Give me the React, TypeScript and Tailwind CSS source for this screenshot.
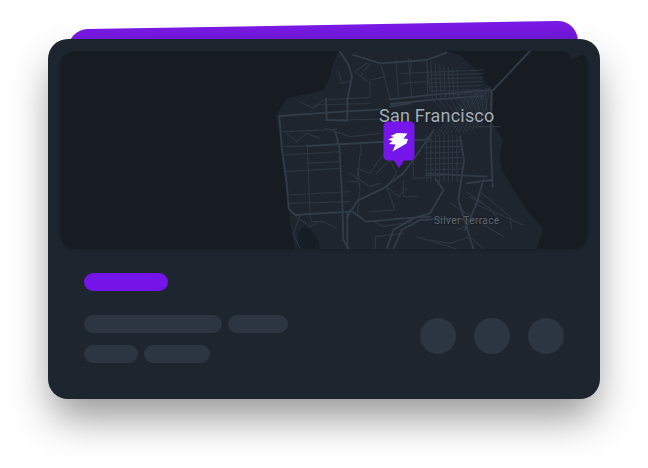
import React from "react";

// everything in the map is traced in 3x zoom coordinates, hence the odd viewBox
const majorRoads = [
  "30,228 170,218 330,208",
  "360,178 500,163 662,150",
  "362,192 500,178 640,168",
  "28,228 36,330 50,430 56,505 75,525 120,522 240,515",
  "210,35 236,75 246,110 232,180 232,242",
  "168,175 170,240 232,242",
  "196,275 208,320 216,460 220,600 235,627",
  "110,318 330,306 480,298",
  "232,530 262,482 340,445 400,400 440,345 492,270",
  "250,45 330,70 470,60 530,38",
  "232,627 232,520",
  "665,155 662,300 668,440",
  "665,155 780,33",
  "570,290 582,360 565,480 590,560 610,627",
  "350,627 370,570 430,535 480,520 520,450 500,420",
  "370,627 395,570 450,540 540,535 600,540",
  "240,510 290,545 400,535 480,530",
  "470,400 650,410",
  "590,430 665,420",
  "640,420 620,490 585,570",
  "360,200 420,190",
];

const minorRoads = [
  "45,345 210,335",
  "50,395 210,385",
  "55,465 240,455",
  "58,490 240,485",
  "112,320 120,520",
  "40,275 200,268",
  "90,185 130,205 160,180 300,172",
  "130,195 300,190",
  "170,240 330,238",
  "300,172 300,130 255,95 290,70",
  "205,95 215,130 246,120",
  "340,100 360,175",
  "330,70 345,110 300,120",
  "378,55 385,170",
  "415,55 425,170",
  "470,60 480,150",
  "395,100 640,90",
  "50,280 80,305 110,280 150,295",
  "90,525 70,580 90,627",
  "120,525 125,545 160,545 200,565",
  "270,340 265,400 270,450 262,520",
  "320,400 360,360 380,400 350,440 385,470 410,445",
  "350,440 375,510 300,515",
  "240,400 300,440 330,430",
  "316,627 316,590 400,580",
  "440,590 560,627",
  "610,490 760,555",
  "630,455 720,530 725,565",
  "540,490 700,590",
  "430,320 430,415",
  "610,260 690,260",
  "300,540 340,560 430,545",
  "640,627 600,590 540,610 480,600",
  "45,320 110,318",
  "240,425 262,425 262,385 300,400 320,370 340,345",
  "270,308 275,345",
  "165,265 196,275 240,290 330,280",
  "300,70 270,110",
  "420,100 425,60",
  "395,130 470,125",
  "110,370 210,365",
  "400,420 400,470 440,470",
  "430,415 480,412",
  "80,530 120,560 140,548",
  "600,470 660,505 690,545",
  "560,570 640,535",
  "590,455 640,490",
];

const landPath =
  "M205 33L190 70 180 110 160 150 100 165 50 175 18 225 30 300 36 340 50 460 60 550 75 627 800 627 820 565 770 510 725 440 695 390 690 345 700 300 668 250 668 155 620 90 570 45 530 33Z";

function MapRoads() {
  const eastGrid = Array.from({ length: 8 }, (_, i) => 470 + i * 13);
  const northRows = Array.from({ length: 6 }, (_, i) => 105 + i * 12);
  const southRows = Array.from({ length: 7 }, (_, i) => 305 + i * 17);
  const hatch = Array.from({ length: 12 }, (_, i) => i * 13);

  return (
    <svg viewBox="-630 33 1584 594" className="block w-full h-full" fill="none" strokeLinejoin="round" strokeLinecap="round">
      <path d={landPath} fill="#1e252e" />
      <path d="M895 60L950 40 954 33 880 33 905 45Z" fill="#1e252e" />
      <path d="M80 627L85 580 105 555 140 590 150 627Z" fill="#171d24" />
      {minorRoads.map((points) => (
        <polyline key={points} points={points} stroke="#2c3540" strokeWidth={3.5} />
      ))}
      {majorRoads.map((points) => (
        <polyline key={points} points={points} stroke="#323c48" strokeWidth={5.5} />
      ))}
      {/* downtown street grids */}
      {northRows.map((y) => (
        <line key={y} x1={480} y1={y} x2={640 - (y - 105) / 4} y2={y - 4} stroke="#2e3843" strokeWidth={3} />
      ))}
      {eastGrid.map((x) => (
        <line key={x} x1={x} y1={60 + (x - 470) / 3} x2={x + 4} y2={175} stroke="#2e3843" strokeWidth={3} />
      ))}
      {hatch.map((n) => (
        <line key={n} x1={490 + n} y1={290 - n * 0.2} x2={590 + n * 0.5} y2={170 - n * 0.2} stroke="#2e3843" strokeWidth={2.5} />
      ))}
      {hatch.map((n) => (
        <line key={n} x1={490 + n * 1.2} y1={180 - n * 0.2} x2={575 + n * 0.6} y2={285 - n * 0.4} stroke="#2e3843" strokeWidth={2.5} />
      ))}
      {southRows.map((y) => (
        <line key={y} x1={465} y1={y} x2={575} y2={y - 3} stroke="#2e3843" strokeWidth={3} />
      ))}
      {eastGrid.map((x) => (
        <line key={x} x1={x} y1={285} x2={x} y2={425} stroke="#2e3843" strokeWidth={3} />
      ))}
    </svg>
  );
}

function Pin() {
  return (
    <svg viewBox="0 0 32 48" className="w-8 h-12">
      <path
        d="M5 0.5H27A4.5 4.5 0 0 1 31.5 5V35A4.5 4.5 0 0 1 27 39.5H21L16 47 11 39.5H5A4.5 4.5 0 0 1 0.5 35V5A4.5 4.5 0 0 1 5 0.5Z"
        fill="#7516ea"
      />
      <path
        d="M14 12L24.5 12.5 20.5 17.5 25 18 23.5 22.5 9.5 30.5 12.5 23.5 6 23 9.5 20 5 18.5 11 16 7.5 15Z"
        fill="#ffffff"
      />
    </svg>
  );
}

export default function App() {
  return (
    <div className="w-[648px] h-[468px] bg-white overflow-hidden pt-[39px] pl-[48px]">
      <div className="relative w-[552px] h-[360px]">
        <div className="absolute left-[20px] top-[-14px] w-[510px] h-[50px] rounded-[20px] bg-gradient-to-b from-[#7a1ae6] to-[#6410c8] -rotate-1" />

        <div className="relative h-full rounded-[20px] bg-[#1d262f] p-3 shadow-[0_22px_40px_-4px_rgba(0,0,0,0.42)]">
          <div className="relative h-[198px] overflow-hidden rounded-[16px] bg-[#171c23] shadow-[0_1px_4px_rgba(0,0,0,0.2)]">
            <MapRoads />
            <span className="absolute left-[319px] top-[53px] font-['Roboto',sans-serif] text-[18px] leading-[24px] tracking-[0.2px] whitespace-nowrap text-[#a3adb8] [text-shadow:0_0_3px_#171c23]">
              San Francisco
            </span>
            <span className="absolute left-[374px] top-[163px] font-['Roboto',sans-serif] text-[10px] leading-[13px] tracking-[0.4px] whitespace-nowrap text-[#5f6974] [text-shadow:0_0_2px_#12161b]">
              Silver Terrace
            </span>
            <div className="absolute left-[323px] top-[70px]">
              <Pin />
            </div>
          </div>

          <div className="flex items-end justify-between pl-6 pr-6 pt-6">
            <div className="flex flex-col gap-3">
              <div className="w-[84px] h-[18px] rounded-full bg-[#7514e8] mb-3" />
              <div className="flex gap-1.5">
                <div className="w-[138px] h-[18px] rounded-full bg-[#2c3641]" />
                <div className="w-[60px] h-[18px] rounded-full bg-[#2c3641]" />
              </div>
              <div className="flex gap-1.5">
                <div className="w-[54px] h-[18px] rounded-full bg-[#2c3641]" />
                <div className="w-[66px] h-[18px] rounded-full bg-[#2c3641]" />
              </div>
            </div>
            <div className="flex gap-[18px] mb-[9px]">
              <div className="w-9 h-9 rounded-full bg-[#2c3641]" />
              <div className="w-9 h-9 rounded-full bg-[#2c3641]" />
              <div className="w-9 h-9 rounded-full bg-[#2c3641]" />
            </div>
          </div>
        </div>
      </div>
    </div>
  );
}
